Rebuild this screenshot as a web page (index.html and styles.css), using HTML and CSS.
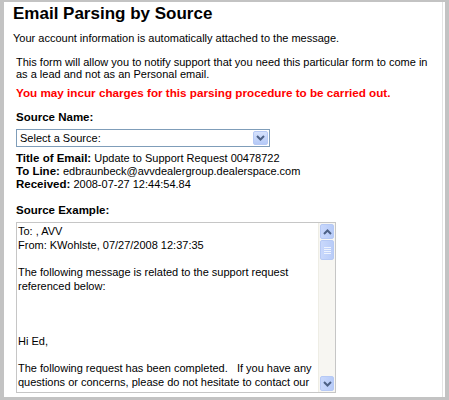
FILE: index.html
```html
<!DOCTYPE html>
<html>
<head>
<meta charset="utf-8">
<link rel="stylesheet" href="styles.css">
</head>
<body>
<div class="frame">
  <h1 class="title">Email Parsing by Source</h1>
  <p class="intro">Your account information is automatically attached to the message.</p>
  <div class="content">
    <p class="desc">This form will allow you to notify support that you need this particular form to come in<br>as a lead and not as an Personal email.</p>
    <p class="warn">You may incur charges for this parsing procedure to be carried out.</p>
    <div class="label label-first">Source Name:</div>
    <div class="select">
      <span class="select-text">Select a Source:</span>
      <span class="select-btn">
        <svg width="9" height="6" viewBox="0 0 9 6"><path d="M1 1 L4.5 4.5 L8 1" fill="none" stroke="#4d6185" stroke-width="2"/></svg>
      </span>
    </div>
    <div class="info"><b>Title of Email:</b> Update to Support Request 00478722</div>
    <div class="info"><b>To Line:</b> edbraunbeck@avvdealergroup.dealerspace.com</div>
    <div class="info"><b>Received:</b> 2008-07-27 12:44:54.84</div>
    <div class="label label-example">Source Example:</div>
    <div class="textarea">
      <div class="ta-text">To: , AVV<br>From: KWohlste, 07/27/2008 12:37:35<br><br>The following message is related to the support request<br>referenced below:<br><br><br><br>Hi Ed,<br><br>The following request has been completed.&nbsp;&nbsp; If you have any<br>questions or concerns, please do not hesitate to contact our</div>
      <div class="scrollbar">
        <div class="sb-btn">
          <svg width="9" height="6" viewBox="0 0 9 6"><path d="M1 5 L4.5 1.5 L8 5" fill="none" stroke="#4d6185" stroke-width="2"/></svg>
        </div>
        <div class="sb-thumb"><span></span><span></span><span></span><span></span></div>
        <div class="sb-track"></div>
        <div class="sb-btn">
          <svg width="9" height="6" viewBox="0 0 9 6"><path d="M1 1 L4.5 4.5 L8 1" fill="none" stroke="#4d6185" stroke-width="2"/></svg>
        </div>
      </div>
    </div>
    <button class="btn" aria-label="Submit"></button>
  </div>
</div>
</body>
</html>
```
FILE: styles.css
```css
html, body {
  margin: 0;
  padding: 0;
  background: #ffffff;
}
.frame {
  width: 449px;
  height: 400px;
  box-sizing: border-box;
  border-style: solid;
  border-color: #c3c3c3;
  border-width: 2px 4px 3px 4px;
  padding: 1px 0 0 9px;
  overflow: hidden;
  font-family: Tahoma, "Liberation Sans", Arial, sans-serif;
  font-size: 11px;
  color: #000;
  box-shadow: inset -2px 0 0 #ffffff, inset -3px 0 0 #e4e4e4;
}
.title {
  margin: 0;
  font-size: 17px;
  line-height: 22px;
  font-weight: bold;
  color: #000;
}
.intro {
  margin: 7px 0 0 0;
  line-height: 13px;
}
.content {
  padding-left: 3px;
}
.desc {
  margin: 11px 0 0 0;
  line-height: 12px;
}
.warn {
  margin: 6px 0 0 0;
  color: #ff0000;
  font-weight: bold;
  font-size: 11.7px;
  line-height: 14px;
}
.label {
  font-weight: bold;
  font-size: 11.5px;
  line-height: 13px;
}
.label-first {
  margin-top: 11px;
}
.label-example {
  margin-top: 13px;
}
.select {
  margin-top: 5px;
  width: 254px;
  height: 18px;
  box-sizing: border-box;
  border: 1px solid #7f9db9;
  display: flex;
  align-items: center;
  justify-content: space-between;
  padding: 1px;
}
.select-text {
  padding-left: 2px;
  line-height: 14px;
}
.select-btn {
  width: 15px;
  height: 14px;
  box-sizing: border-box;
  border: 1px solid #b6c9f5;
  border-radius: 2px;
  background: linear-gradient(#d6e2fd, #b4c9f7);
  display: flex;
  align-items: center;
  justify-content: center;
}
.info {
  margin-top: 0;
  line-height: 13px;
}
.select + .info {
  margin-top: 5px;
}
.info b {
  font-size: 11.5px;
}
.textarea {
  margin-top: 5px;
  width: 320px;
  height: 171px;
  box-sizing: border-box;
  border: 1px solid #c6c6c6;
  display: flex;
  overflow: hidden;
}
.ta-text {
  flex: 1;
  padding: 2px 0 0 1px;
  line-height: 13.7px;
  white-space: nowrap;
  overflow: hidden;
}
.scrollbar {
  width: 17px;
  flex: none;
  display: flex;
  flex-direction: column;
  background: #f7f6f2;
  border-left: 1px solid #eeede5;
  box-sizing: border-box;
}
.sb-btn {
  height: 15px;
  margin: 0 1px;
  box-sizing: border-box;
  border: 1px solid #b6c9f5;
  border-radius: 2px;
  background: linear-gradient(90deg, #c9d8fc, #b7cbf8);
  display: flex;
  align-items: center;
  justify-content: center;
}
.sb-btn:first-child {
  margin-top: 1px;
}
.sb-btn:last-child {
  margin-bottom: 1px;
}
.sb-thumb {
  height: 20px;
  margin: 1px 1px 0 1px;
  box-sizing: border-box;
  border: 1px solid #b6c9f5;
  border-radius: 2px;
  background: linear-gradient(90deg, #c9d8fc, #b9ccf8);
  display: flex;
  flex-direction: column;
  align-items: center;
  justify-content: center;
  gap: 1px;
}
.sb-thumb span {
  width: 7px;
  height: 1px;
  background: #eef3fe;
}
.sb-track {
  flex: 1;
}
.btn {
  display: block;
  margin-top: 4px;
  margin-left: 1px;
  width: 58px;
  height: 22px;
  border: 1px solid #003c74;
  border-radius: 3px;
  background: #f4f4f0;
  padding: 0;
}
```
